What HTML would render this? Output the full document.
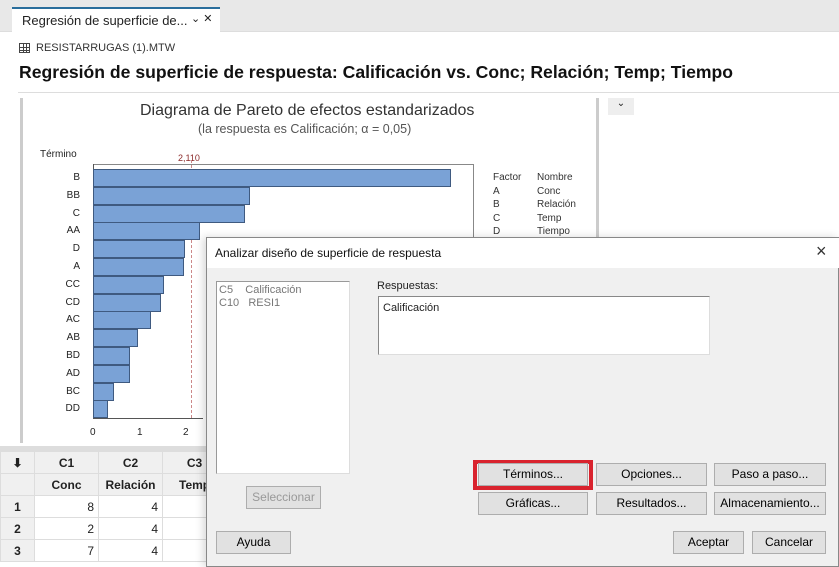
<!DOCTYPE html>
<html><head><meta charset="utf-8"><style>
*{margin:0;padding:0;box-sizing:border-box}
body{width:839px;height:567px;overflow:hidden;background:#fff;font-family:"Liberation Sans",sans-serif;position:relative;color:#222}
.a{position:absolute}
.btn{position:absolute;background:#e1e1e1;border:1px solid #adadad;font-size:12px;text-align:center;color:#000;line-height:21px}
.lbl{position:absolute;font-size:10px;text-align:right;width:30px}
</style></head><body>
<div class="a" style="left:0;top:0;width:839px;height:32px;background:#e8e8e8;border-bottom:1px solid #ddd"></div>
<div class="a" style="left:12px;top:7px;width:208px;height:26px;background:#fff;border-top:2px solid #2a6e9c"></div>
<div class="a" style="left:22px;top:13px;font-size:13px">Regresión de superficie de...</div>
<div class="a" style="left:191px;top:12px;font-size:11px">⌄ ✕</div>
<div class="a" style="left:19px;top:43px;width:11px;height:10px;border:1px solid #444;background:linear-gradient(#444,#444) 3px 0/1px 100% no-repeat,linear-gradient(#444,#444) 6px 0/1px 100% no-repeat,linear-gradient(#444,#444) 0 3px/100% 1px no-repeat,linear-gradient(#444,#444) 0 6px/100% 1px no-repeat"></div>
<div class="a" style="left:36px;top:42px;font-size:11px;color:#333">RESISTARRUGAS (1).MTW</div>
<div class="a" style="left:19px;top:62px;font-size:17.6px;font-weight:bold;color:#111">Regresión de superficie de respuesta: Calificación vs. Conc; Relación; Temp; Tiempo</div>
<div class="a" style="left:18px;top:92px;width:821px;height:1px;background:#ddd"></div>
<div class="a" style="left:20px;top:98px;width:3px;height:345px;background:#ccc"></div>
<div class="a" style="left:596px;top:98px;width:3px;height:140px;background:#ccc"></div>
<div class="a" style="left:608px;top:98px;width:26px;height:17px;background:#eee;font-size:10px;text-align:center">⌄</div>
<div class="a" style="left:140px;top:102px;font-size:16px;color:#333">Diagrama de Pareto de efectos estandarizados</div>
<div class="a" style="left:198px;top:122px;font-size:12.5px;color:#555">(la respuesta es Calificación; α = 0,05)</div>
<div class="a" style="left:40px;top:149px;font-size:10px">Término</div>
<div class="a" style="left:178px;top:153px;font-size:9px;color:#8b2a2a">2,110</div>
<div class="a" style="left:93px;top:164px;width:381px;height:255px;border:1px solid #888;border-bottom:none"></div>
<div class="a" style="left:191px;top:160px;width:0;height:258px;border-left:1px dashed #c88"></div>
<div class="a" style="left:93px;top:164px;width:1px;height:255px;background:#555"></div>
<div id="bars"></div>
<div class="a" style="left:93px;top:418px;width:110px;height:1px;background:#555"></div>
<div class="a" style="left:90px;top:427px;font-size:10px">0</div>
<div class="a" style="left:137px;top:427px;font-size:10px">1</div>
<div class="a" style="left:183px;top:427px;font-size:10px">2</div>
<div class="a" style="left:493px;top:171px;font-size:10px;line-height:13.5px;color:#333">Factor<br>A<br>B<br>C<br>D</div>
<div class="a" style="left:537px;top:171px;font-size:10px;line-height:13.5px;color:#333">Nombre<br>Conc<br>Relación<br>Temp<br>Tiempo</div>
<div class="a" style="left:0;top:446px;width:839px;height:5px;background:#ddd"></div>
<table class="a" style="left:0;top:451px;border-collapse:collapse;font-size:12px">
<tr style="height:22px;background:#f0f0f0;font-weight:bold"><td style="width:34px;text-align:center;border:1px solid #ddd">⬇</td><td style="width:64px;text-align:center;border:1px solid #ddd">C1</td><td style="width:64px;text-align:center;border:1px solid #ddd">C2</td><td style="width:64px;text-align:center;border:1px solid #ddd">C3</td></tr>
<tr style="height:22px;background:#f0f0f0;font-weight:bold"><td style="border:1px solid #ddd"></td><td style="text-align:center;border:1px solid #ddd">Conc</td><td style="text-align:center;border:1px solid #ddd">Relación</td><td style="border:1px solid #ddd;padding-left:16px">Temp</td></tr>
<tr style="height:22px"><td style="text-align:center;background:#f0f0f0;font-weight:bold;border:1px solid #ddd">1</td><td style="text-align:right;padding-right:4px;border:1px solid #ddd">8</td><td style="text-align:right;padding-right:4px;border:1px solid #ddd">4</td><td style="text-align:right;border:1px solid #ddd">1</td></tr>
<tr style="height:22px"><td style="text-align:center;background:#f0f0f0;font-weight:bold;border:1px solid #ddd">2</td><td style="text-align:right;padding-right:4px;border:1px solid #ddd">2</td><td style="text-align:right;padding-right:4px;border:1px solid #ddd">4</td><td style="text-align:right;border:1px solid #ddd">1</td></tr>
<tr style="height:22px"><td style="text-align:center;background:#f0f0f0;font-weight:bold;border:1px solid #ddd">3</td><td style="text-align:right;padding-right:4px;border:1px solid #ddd">7</td><td style="text-align:right;padding-right:4px;border:1px solid #ddd">4</td><td style="text-align:right;border:1px solid #ddd">1</td></tr>
</table>
<div class="a" style="left:206px;top:237px;width:633px;height:330px;background:#f0f0f0;border:1px solid #888;box-shadow:-3px 0 8px rgba(0,0,0,.15)"></div>
<div class="a" style="left:207px;top:238px;width:632px;height:30px;background:#fff"></div>
<div class="a" style="left:215px;top:246px;font-size:12px;color:#111">Analizar diseño de superficie de respuesta</div>
<div class="a" style="left:816px;top:241px;font-size:18px;color:#333">×</div>
<div class="a" style="left:216px;top:281px;width:134px;height:193px;background:#fff;border:1px solid #999;border-right-color:#ddd;border-bottom-color:#ddd"></div>
<div class="a" style="left:219px;top:284px;font-size:11px;color:#777;line-height:13px">C5&nbsp;&nbsp;&nbsp;&nbsp;Calificación<br>C10&nbsp;&nbsp;&nbsp;RESI1</div>
<div class="btn" style="left:246px;top:486px;width:75px;height:23px;color:#999">Seleccionar</div>
<div class="btn" style="left:216px;top:531px;width:75px;height:23px">Ayuda</div>
<div class="a" style="left:377px;top:280px;font-size:11px">Respuestas:</div>
<div class="a" style="left:378px;top:296px;width:332px;height:59px;background:#fff;border:1px solid #888;border-right-color:#ddd;border-bottom-color:#ddd"></div>
<div class="a" style="left:383px;top:302px;font-size:11px">Calificación</div>
<div class="a" style="left:473px;top:460px;width:120px;height:30px;border:4px solid #d9232e"></div>
<div class="btn" style="left:478px;top:463px;width:110px;height:23px">Términos...</div>
<div class="btn" style="left:596px;top:463px;width:111px;height:23px">Opciones...</div>
<div class="btn" style="left:714px;top:463px;width:112px;height:23px">Paso a paso...</div>
<div class="btn" style="left:478px;top:492px;width:110px;height:23px">Gráficas...</div>
<div class="btn" style="left:596px;top:492px;width:111px;height:23px">Resultados...</div>
<div class="btn" style="left:714px;top:492px;width:112px;height:23px">Almacenamiento...</div>
<div class="btn" style="left:673px;top:531px;width:71px;height:23px">Aceptar</div>
<div class="btn" style="left:752px;top:531px;width:74px;height:23px">Cancelar</div>
<script>
var d=[["B",451],["BB",250],["C",245],["AA",200],["D",185],["A",184],["CC",164],["CD",161],["AC",151],["AB",138],["BD",130],["AD",130],["BC",114],["DD",108]],h="";
d.forEach(function(e,i){var y=169+i*17.8;
h+='<div class="lbl" style="left:50px;top:'+(y+3)+'px">'+e[0]+'</div>';
h+='<div class="a" style="left:93px;top:'+y+'px;width:'+(e[1]-93)+'px;height:18px;background:#7aa2d6;border:1px solid #3f5a80"></div>';});
document.getElementById("bars").innerHTML=h;
</script>
</body></html>
